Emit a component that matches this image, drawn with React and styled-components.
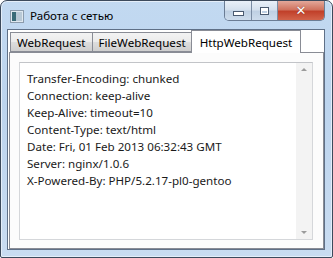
import React from "react";
import styled, { createGlobalStyle } from "styled-components";

const GlobalStyle = createGlobalStyle`
  html, body {
    margin: 0;
    padding: 0;
    background: #ffffff;
  }
  body {
    font-family: "Noto Sans", "Open Sans", sans-serif;
  }
`;

const Window = styled.div`
  box-sizing: border-box;
  width: 333px;
  height: 258px;
  display: flex;
  flex-direction: column;
  border: 1px solid #3c4a5c;
  border-radius: 7px 7px 2px 2px;
  background: linear-gradient(180deg, #c2d9f1 0%, #bcd4ee 40%, #c9dcf1 100%);
  box-shadow: inset 0 0 0 1px #e4eef9;
  overflow: hidden;
`;

const TitleBar = styled.div`
  height: 28px;
  display: flex;
  align-items: flex-start;
  flex-shrink: 0;
`;

const AppIcon = styled.div`
  width: 12px;
  height: 11px;
  margin: 9px 0 0 9px;
  border: 1px solid #8b9bac;
  background: linear-gradient(90deg, #3a6b78 0 45%, #b9c9d6 45% 100%);
  box-shadow: inset 0 0 0 1px #dfe8ef;
`;

const Title = styled.div`
  margin: 7px 0 0 6px;
  font-size: 11.6px;
  color: #000;
`;

const Caption = styled.div`
  margin-left: auto;
  margin-right: 7px;
  display: flex;
  height: 19px;
  border: 1px solid #6a7c94;
  border-top: none;
  border-radius: 0 0 5px 5px;
  overflow: hidden;
`;

const CapButton = styled.div`
  width: ${(p) => p.w}px;
  height: 100%;
  display: flex;
  align-items: center;
  justify-content: center;
  border-left: ${(p) => (p.first ? "none" : "1px solid #7a8ca3")};
  background: ${(p) =>
    p.close
      ? "linear-gradient(180deg, #e3a89a 0%, #d0735f 45%, #c1402a 55%, #d2634a 100%)"
      : "linear-gradient(180deg, #e9f0f8 0%, #d5e1ee 45%, #bfd0e3 55%, #cddcec 100%)"};
`;

const MinGlyph = styled.div`
  width: 9px;
  height: 3px;
  margin-top: 5px;
  background: #fff;
  border: 1px solid #4a5a70;
`;

const MaxGlyph = styled.div`
  width: 7px;
  height: 6px;
  border: 1px solid #4a5a70;
  box-shadow: inset 0 0 0 1px #fff, inset 0 2px 0 1px #fff;
`;

const CloseGlyph = styled.div`
  color: #fff;
  font-family: "DejaVu Sans", sans-serif;
  font-size: 13px;
  font-weight: bold;
  line-height: 1;
  text-shadow: 0 0 1px #6b1d10;
`;

const Client = styled.div`
  flex: 1;
  margin: 0 7px 7px 6px;
  border: 1px solid #5f7087;
  background: #ffffff;
  display: flex;
  flex-direction: column;
`;

const TabStrip = styled.div`
  display: flex;
  align-items: flex-end;
  height: 22px;
  padding-left: 2px;
  flex-shrink: 0;
`;

const Tab = styled.div`
  box-sizing: border-box;
  height: ${(p) => (p.active ? 23 : 20)}px;
  padding: ${(p) => (p.active ? "0 8px" : "0 6px")};
  margin-left: ${(p) => (p.active ? "-2px" : "0")};
  margin-bottom: ${(p) => (p.active ? "-1px" : "0")};
  display: flex;
  align-items: center;
  font-size: 11.6px;
  color: #000;
  border: 1px solid #898c95;
  border-bottom: ${(p) => (p.active ? "none" : "1px solid #898c95")};
  border-left: ${(p) => (p.first || p.active ? "1px solid #898c95" : "none")};
  background: ${(p) =>
    p.active
      ? "#ffffff"
      : "linear-gradient(180deg, #f3f3f3 0%, #ebebeb 50%, #dddddd 51%, #cfcfcf 100%)"};
  position: relative;
  z-index: ${(p) => (p.active ? 1 : 0)};
`;

const Panel = styled.div`
  flex: 1;
  border: 1px solid #898c95;
  margin: 0 0 0 1px;
  background: #fcfcfc;
  padding: 9px 10px 8px 9px;
  display: flex;
`;

const TextBox = styled.div`
  flex: 1;
  display: flex;
  border: 1px solid #d5d7da;
  border-top-color: #c2c4c8;
  background: #ffffff;
`;

const Lines = styled.div`
  flex: 1;
  padding: 7px 0 0 7px;
  font-size: 11.6px;
  line-height: 17px;
  color: #1a1a1a;
  white-space: nowrap;
  overflow: hidden;
`;

const ScrollBar = styled.div`
  width: 16px;
  background: #f3f3f3;
  display: flex;
  flex-direction: column;
  justify-content: space-between;
  align-items: center;
  padding: 5px 0;
`;

const Arrow = styled.div`
  width: 0;
  height: 0;
  border-left: 3px solid transparent;
  border-right: 3px solid transparent;
  border-${(p) => (p.up ? "bottom" : "top")}: 3px solid #9b9b9b;
`;

const headers = [
  "Transfer-Encoding: chunked",
  "Connection: keep-alive",
  "Keep-Alive: timeout=10",
  "Content-Type: text/html",
  "Date: Fri, 01 Feb 2013 06:32:43 GMT",
  "Server: nginx/1.0.6",
  "X-Powered-By: PHP/5.2.17-pl0-gentoo",
];

const tabs = ["WebRequest", "FileWebRequest", "HttpWebRequest"];

const App = () => {
  return (
    <>
      <GlobalStyle />
      <Window>
        <TitleBar>
          <AppIcon />
          <Title>Работа с сетью</Title>
          <Caption>
            <CapButton w={26} first>
              <MinGlyph />
            </CapButton>
            <CapButton w={25}>
              <MaxGlyph />
            </CapButton>
            <CapButton w={46} close>
              <CloseGlyph>✕</CloseGlyph>
            </CapButton>
          </Caption>
        </TitleBar>
        <Client>
          <TabStrip>
            {tabs.map((t, i) => (
              <Tab key={t} first={i === 0} active={i === 2}>
                {t}
              </Tab>
            ))}
          </TabStrip>
          <Panel>
            <TextBox>
              <Lines>
                {headers.map((h) => (
                  <div key={h}>{h}</div>
                ))}
              </Lines>
              <ScrollBar>
                <Arrow up />
                <Arrow />
              </ScrollBar>
            </TextBox>
          </Panel>
        </Client>
      </Window>
    </>
  );
};

export default App;
